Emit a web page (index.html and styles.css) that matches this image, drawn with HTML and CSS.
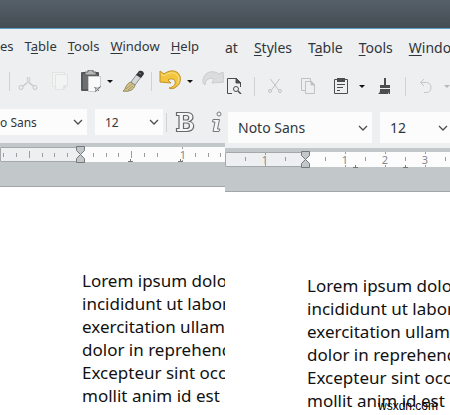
FILE: index.html
```
<!DOCTYPE html>
<html lang="en">
  <head>
    <meta charset="UTF-8" />
    <meta name="viewport" content="width=device-width, initial-scale=1" />
    <title>Writer</title>
    <link rel="stylesheet" href="styles.css">
  </head>
  <body>
    <header class="titlebar"></header>

    <main class="panes">
      <section class="pane pane-small">
        <nav class="menubar">
          <button>es</button>
          <button>T<u>a</u>ble</button>
          <button><u>T</u>ools</button>
          <button><u>W</u>indow</button>
          <button><u>H</u>elp</button>
        </nav>

        <div class="toolbar">
          <span class="separator"></span>
          <div class="group">
            <button class="tool" aria-label="Cut" disabled>
              <svg width="22" height="22" viewBox="0 0 22 22" fill="none" stroke="#c3c5c7">
                <path d="M12.500 7v4L6 16M10.500 7v4l6 5" stroke="#d2d4d5" stroke-width="1.500" />
                <circle cx="4" cy="17.500" r="2" />
                <circle cx="18" cy="17.500" r="2" />
                <path d="M6 16l4-3M16 16l-4-3" />
              </svg>
            </button>
            <button class="tool" aria-label="Copy" disabled>
              <svg width="22" height="22" viewBox="0 0 22 22" fill="#f2f3f3" stroke="#e2e4e4">
                <path d="M4.500 2.500h12v14h-12z" />
                <path d="M7.500 4.500h12v11l-4 4h-8z" />
                <path d="M15.500 19.500v-4h4z" fill="#dfe2e2" />
              </svg>
            </button>
            <span class="split">
              <button class="tool" aria-label="Paste">
                <svg width="22" height="22" viewBox="0 0 22 22">
                  <rect x="2" y="2" width="18" height="19" rx="1" fill="#55585a" />
                  <rect x="4" y="4" width="14" height="15" fill="#6d7072" />
                  <path d="M6 5V2h3V0h5v2h3v3z" fill="#b7babb" stroke="#444" stroke-width=".7" />
                  <path d="M9.500 6.500h12v11l-4 4h-8z" fill="#fafafa" stroke="#c9cbcc" />
                  <path d="M16.500 21.500c1-2 0-4-1-4 2 1 4 1 6-1z" fill="#eee" stroke="#666" stroke-width=".8" />
                </svg>
              </button>
              <button class="drop" aria-label="Paste options"></button>
            </span>
            <button class="tool" aria-label="Clone formatting">
              <svg width="22" height="22" viewBox="0 0 22 22">
                <path d="M1 21c3-1 2-7 8-9l4 3c-1 5-6 7-12 6z" fill="#d5c68b" stroke="#7b6d42" stroke-width=".8" />
                <path d="M4 19l6-5M6 20l5-4" stroke="#8f8050" stroke-width=".7" />
                <path d="M9 12l6-8 4 3-6 8z" fill="#d6d8da" stroke="#77797b" stroke-width=".8" />
                <path d="M14 5l3-4c2-1 5 0 5 3l-3 4z" fill="#333638" />
                <path d="M17 3l2 1" stroke="#888" />
              </svg>
            </button>
          </div>
          <span class="separator"></span>
          <div class="group">
            <span class="split">
              <button class="tool" aria-label="Undo">
                <svg width="22" height="22" viewBox="0 0 22 22">
                  <path d="M1 1l4 3c5-4 11-4 14-1 4 4 3 11-2 14-2 2-6 2-7 1 5-1 7-4 6-7-1-2-4-3-7-1l3 3-11-1z" fill="#f2c53c" stroke="#c1922a" stroke-linejoin="round" />
                  <path d="M2 4l3 2c5-4 10-4 13-1 2 2 2 6 1 8" fill="none" stroke="#fae28c" />
                </svg>
              </button>
              <button class="drop" aria-label="Undo options"></button>
            </span>
            <button class="tool" aria-label="Redo" disabled>
              <svg width="22" height="22" viewBox="0 0 22 22">
                <path d="M21 2l-4 2C13 1 7 1 4 4c-3 3-4 8-2 10l1 1c1-3 0-4 2-5 2-2 5-2 7-1l-2 4 12-1z" fill="#dadcdd" stroke="#c9cbcc" stroke-linejoin="round" />
              </svg>
            </button>
          </div>
        </div>

        <div class="formatbar">
          <select class="font-name" aria-label="Font name">
            <option>o Sans</option>
          </select>
          <select class="font-size" aria-label="Font size">
            <option>12</option>
          </select>
          <span class="separator"></span>
          <button class="tool bold" aria-label="Bold">
            <svg width="20" height="22" viewBox="0 0 20 22">
              <path d="M1.500 1.500h10c8 0 8 7 3 9 6 1 6 10-3 10h-10v-3h2.500v-13H1.500zM8.500 4.500v4.500h3c3 0 3-4.500 0-4.500zM8.500 12v5.500h3c4 0 4-5.500 0-5.500z" fill="#f6f6f6" fill-rule="evenodd" stroke="#68696b" stroke-width="1.200" />
            </svg>
          </button>
          <button class="tool" aria-label="Italic">
            <svg width="12" height="22" viewBox="0 0 12 22" fill="#f6f6f6" stroke="#77787a">
              <circle cx="8" cy="3" r="2" />
              <path d="M2 8.500h6.500L6.500 18h2.500l-1 2.500H2L4 11H1.500z" />
            </svg>
          </button>
        </div>

        <div class="ruler-area">
          <svg class="ruler" height="17" aria-hidden="true">
            <path class="margin" d="M.5.500h80v14H.5z" />
            <path class="tick" d="M3.500 6v4M16.500 6v4M29.500 4v7M42.500 6v4M54.500 6v4M67.500 6v4M93.500 6v4M106.500 6v4M118.500 6v4M131.500 4v7M144.500 6v4M157.500 6v4M182.500 0v2M182.500 13v2M195.500 6v4M208.500 6v4M220.500 6v4" />
            <text x="183" y="12">1</text>
            <path class="tab" d="M128 14.500h5M130.500 12v3M178 14.500h5M180.500 12v3" />
            <path class="marker" d="M76.500-.5h8v4l-4 4-4-4zM76.500 15.500h8v-4l-4-4-4 4z" />
          </svg>
        </div>

        <article class="page">
          <p>
            Lorem ipsum dolor<br>
            incididunt ut labore<br>
            exercitation ullam<br>
            dolor in reprehend<br>
            Excepteur sint occ<br>
            mollit anim id est
          </p>
        </article>
      </section>

      <section class="pane pane-large">
        <nav class="menubar">
          <button>at</button>
          <button><u>S</u>tyles</button>
          <button>T<u>a</u>ble</button>
          <button><u>T</u>ools</button>
          <button><u>W</u>indow</button>
        </nav>

        <div class="toolbar">
          <button class="tool" aria-label="Print preview">
            <svg width="16" height="16" viewBox="0 0 16 16" fill="none" stroke="#4d4d4d">
              <path d="M6 15.500H1.500V.5h9l4 4V9" />
              <path d="M10 0v5h5z" fill="#4d4d4d" />
              <circle cx="10" cy="11" r="2.500" />
              <path d="M12 13l3 3" stroke-width="1.500" />
            </svg>
          </button>
          <span class="separator"></span>
          <div class="group">
            <button class="tool" aria-label="Cut" disabled>
              <svg width="16" height="16" viewBox="0 0 16 16" fill="none" stroke="#bfc1c3">
                <path d="M3.500 1l8 11M12.500 1l-8 11" />
                <circle cx="3" cy="13" r="1.500" />
                <circle cx="13" cy="13" r="1.500" />
              </svg>
            </button>
            <button class="tool" aria-label="Copy" disabled>
              <svg width="16" height="16" viewBox="0 0 16 16" fill="none" stroke="#bfc1c3">
                <path d="M5 12.500H1.500V.5h9V3" />
                <path d="M5.500 3.500h6l3 3v9h-9z" />
                <path d="M11 3v4h4z" fill="#bfc1c3" />
              </svg>
            </button>
            <span class="split">
              <button class="tool" aria-label="Paste">
                <svg width="16" height="16" viewBox="0 0 16 16" fill="none" stroke="#4d4d4d">
                  <path d="M1.500 1.500h13v14h-13z" />
                  <path d="M4 0h8v4H4z" fill="#4d4d4d" stroke="none" />
                  <path d="M4 6.500h8M4 9.500h6M4 12.500h3" />
                </svg>
              </button>
              <button class="drop" aria-label="Paste options"></button>
            </span>
          </div>
          <button class="tool" aria-label="Clone formatting">
            <svg width="16" height="16" viewBox="0 0 16 16" fill="#4d4d4d">
              <path d="M7 0h2v7h4v3H3V7h4zM3 11h10v5h-1v-2l-1 2H1c2-1 2-3 2-5z" />
            </svg>
          </button>
          <span class="separator"></span>
          <span class="split">
            <button class="tool" aria-label="Undo" disabled>
              <svg width="16" height="16" viewBox="0 0 16 16" fill="none" stroke="#c3c5c7">
                <path d="M6 1L2.500 4.500 6 8M3 4.500h5.500c6 0 6 10 0 10H6" />
              </svg>
            </button>
            <button class="drop" aria-label="Undo options" disabled></button>
          </span>
        </div>

        <div class="formatbar">
          <select class="font-name" aria-label="Font name">
            <option>Noto Sans</option>
          </select>
          <select class="font-size" aria-label="Font size">
            <option>12</option>
          </select>
        </div>

        <div class="ruler-area">
          <svg class="ruler" height="17" aria-hidden="true">
            <path class="margin" d="M.5.500h80v14H.5z" />
            <path class="tick" d="M20.500 5v4M40.500 1v2M40.500 12v2M60.500 5v4M100.500 5v4M120.500 0v2M120.500 13v2M140.500 5v4M160.500 0v2M160.500 13v2M180.500 5v4M200.500 0v2M200.500 13v2M220.500 5v4" />
            <text x="40" y="12">1</text>
            <text x="120" y="12">1</text>
            <text x="160" y="12">2</text>
            <text x="200" y="12">3</text>
            <path class="tab" d="M128 15.500h5M130.500 13v3M178 15.500h5M180.500 13v3" />
            <path class="marker" d="M76.500-.5h8v4l-4 4-4-4zM76.500 15.500h8v-4l-4-4-4 4z" />
          </svg>
        </div>

        <article class="page">
          <p>
            Lorem ipsum dolor<br>
            incididunt ut labore<br>
            exercitation ullam<br>
            dolor in reprehend<br>
            Excepteur sint occ<br>
            mollit anim id est
          </p>
        </article>
      </section>
    </main>

    <div class="watermark">wsxdn.com</div>
  </body>
</html>
```
FILE: styles.css
```
* {
  box-sizing: border-box;
}

body {
  display: flex;
  flex-direction: column;
  height: 100vh;
  margin: 0;
  overflow: hidden;
  background: #fff;
  color: #31363b;
  font-family: "Noto Sans", sans-serif;
}

button,
select {
  border: 0;
  padding: 0;
  color: inherit;
  font: inherit;
}

button {
  background: none;
}

.titlebar {
  flex: none;
  height: 29px;
  background: linear-gradient(#566069, #434c52);
  border-bottom: 1px solid #5a9fc8;
}

.panes {
  display: grid;
  grid-template-columns: 1fr 1fr;
  flex: 1;
  min-height: 0;
}

.pane {
  display: flex;
  flex-direction: column;
  min-width: 0;
  overflow: hidden;
  background: #eeeff1;
}

.pane-small {
  font-size: 13px;
}

.pane-large {
  font-size: 14px;
}

/* menus */
.menubar {
  display: flex;
  flex: none;
  align-items: center;
  height: 36px;
  white-space: nowrap;
}

.menubar u {
  text-underline-offset: 2px;
}

.pane-small .menubar {
  gap: 11px;
  height: 34px;
}

.pane-large .menubar {
  gap: 16px;
}

/* toolbars */
.toolbar,
.group,
.split {
  display: flex;
  flex: none;
  align-items: center;
}

.pane-small .toolbar {
  gap: 7px;
  height: 36px;
  padding-left: 9px;
}

.pane-small .group {
  gap: 9px;
}

.pane-large .toolbar {
  gap: 12px;
  height: 42px;
  padding-left: 1px;
}

.pane-large .group {
  gap: 17px;
}

.tool {
  display: block;
  flex: none;
}

.tool svg {
  display: block;
}

.separator {
  flex: none;
  width: 1px;
  height: 19px;
  background: #d0d2d4;
}

.drop {
  display: flex;
  justify-content: flex-end;
  width: 12px;
}

.pane-large .drop {
  width: 16px;
}

.drop::after {
  content: "";
  border: solid transparent;
  border-width: 3px 3px 0;
  border-top-color: #111;
}

.drop:disabled::after {
  border-top-color: #b5b7b9;
}

/* font name and size */
.formatbar {
  display: flex;
  flex: none;
  align-items: center;
  gap: 8px;
}

.formatbar select {
  flex: none;
  appearance: none;
  padding-left: 10px;
  background: #fcfcfc url("data:image/svg+xml,%3Csvg xmlns='http://www.w3.org/2000/svg' width='10' height='6'%3E%3Cpath d='M1 1l4 4 4-4' fill='none' stroke='%234d4d4d' stroke-width='1.300'/%3E%3C/svg%3E") no-repeat right 4px center;
}

.pane-small .formatbar {
  padding: 10px 0 8px;
  font-size: 12px;
}

.pane-small select {
  height: 26px;
}

.pane-small .font-name {
  width: 87px;
  padding-left: 0;
}

.pane-small .font-size {
  width: 68px;
}

.pane-small .formatbar .separator {
  margin-left: -5px;
}

.formatbar .bold {
  margin-right: 8px;
}

.pane-large .formatbar {
  padding: 5px 0 5px 3px;
}

.pane-large select {
  height: 31px;
}

.pane-large .font-name {
  width: 144px;
}

.pane-large .font-size {
  width: 72px;
}

/* ruler */
.ruler-area {
  flex: none;
  height: 44px;
  padding-top: 4px;
  background: #c2c7ca;
  border-bottom: 1px solid #a2a6a8;
}

.ruler {
  display: block;
  width: 100%;
  overflow: visible;
  background: linear-gradient(#fcfcfc, #fcfcfc) no-repeat 0 0 / 100% 15px;
  font-size: 11px;
}

.ruler text {
  fill: #85898c;
  text-anchor: middle;
}

.margin {
  fill: #eeeff1;
  stroke: #a4a8aa;
}

.tick {
  stroke: #999da0;
}

.tab {
  stroke: #75797b;
}

.marker {
  fill: #c2c7ca;
  stroke: #75797b;
}

/* document */
.page {
  flex: 1;
  padding: 82px 0 0 82px;
  background: #fff;
  color: #111;
  font-size: 17px;
  line-height: 23px;
  white-space: nowrap;
}

.page p {
  margin: 0;
}

.watermark {
  position: absolute;
  right: 12px;
  bottom: 2px;
  color: #000;
  font: 12px/14px "Liberation Sans", sans-serif;
}
```
